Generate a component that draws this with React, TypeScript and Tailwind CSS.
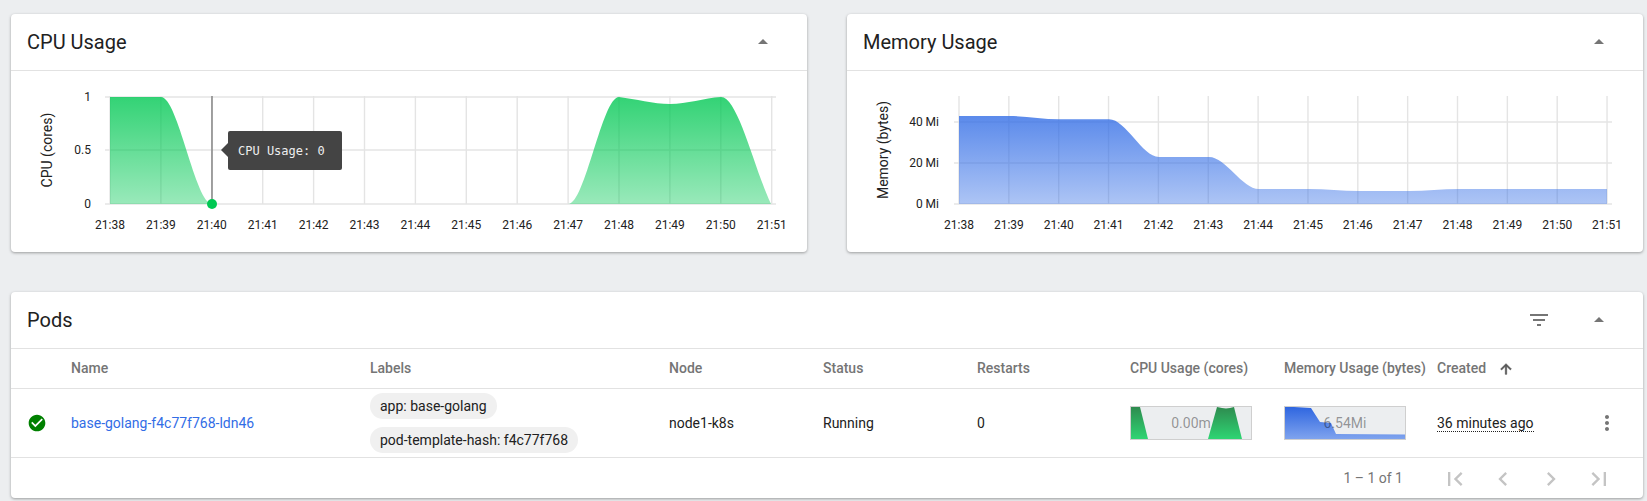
import type { ReactNode } from "react";

const mono = "font-['DejaVu_Sans_Mono',monospace]";
const rowCols =
  "grid grid-cols-[60px_299px_299px_154px_154px_153px_154px_153px_135px_1fr] items-center";

const xTicks = [
  "21:38", "21:39", "21:40", "21:41", "21:42", "21:43", "21:44",
  "21:45", "21:46", "21:47", "21:48", "21:49", "21:50", "21:51",
];

function Icon({ d, size = 24, className }: { d: string; size?: number; className?: string }) {
  return (
    <svg width={size} height={size} viewBox="0 0 24 24" className={className} fill="currentColor">
      <path d={d} />
    </svg>
  );
}

function CardHeader({ title, children }: { title: string; children?: ReactNode }) {
  return (
    <div className="h-[57px] flex items-center pl-4 pr-8 border-b border-[#e2e2e2]">
      <h2 className="text-[20px] text-[#212121] grow">{title}</h2>
      {children}
      <Icon d="M7 14l5-5 5 5z" className="text-[#757575]" />
    </div>
  );
}

type Axis = {
  x0: number;
  step: number;
  hx: [number, number];
  yLabels: [string, number][];
  yLabelX: number;
};

function Grid({ x0, step, hx, yLabels, yLabelX }: Axis) {
  return (
    <g fontSize="12" fill="#212121">
      {xTicks.map((t, i) => (
        <g key={t}>
          <line x1={x0 + i * step} x2={x0 + i * step} y1={96} y2={204} stroke="#e4e4e4" strokeWidth="1.4" />
          <text x={x0 + i * step} y={229} textAnchor="middle">{t}</text>
        </g>
      ))}
      {yLabels.map(([label, y]) => (
        <g key={label}>
          <line x1={hx[0]} x2={hx[1]} y1={y} y2={y} stroke="#e4e4e4" strokeWidth="1.4" />
          <text x={yLabelX} y={y + 4} textAnchor="end">{label}</text>
        </g>
      ))}
    </g>
  );
}

function CpuChart() {
  return (
    <div className="relative h-[181px]">
      <svg width="796" height="181" viewBox="11 71 796 181" className="block">
        <defs>
          <linearGradient id="cpuFill" x1="0" y1="0" x2="0" y2="1">
            <stop offset="0" stopColor="#00c853" stopOpacity="0.8" />
            <stop offset="1" stopColor="#00c853" stopOpacity="0.4" />
          </linearGradient>
        </defs>
        <Grid
          x0={110}
          step={50.9}
          hx={[105, 776]}
          yLabels={[["1", 97], ["0.5", 150], ["0", 204]]}
          yLabelX={91}
        />
        <text transform="translate(52 150) rotate(-90)" textAnchor="middle" fontSize="14" fill="#212121">
          CPU (cores)
        </text>
        <path
          fill="url(#cpuFill)"
          d="M110 97 L161 97 C178 97 195 204 212 204 L110 204 Z"
        />
        <path
          fill="url(#cpuFill)"
          d="M568 204 C585 204 602 97 619 97 C636 99 653 104 670 104 C687 104 704 98 721 97 C738 97 754 168 771 204 Z"
        />
        <line x1="212" x2="212" y1="96" y2="204" stroke="#555" strokeWidth="1" />
        <circle cx="212" cy="204" r="5" fill="#00c853" />
      </svg>
      <div className={`${mono} absolute left-[217px] top-[60px] w-[114px] h-[39px] rounded-[2px] bg-[#444] text-[#eee] text-[12px] flex items-center pl-[10px]`}>
        CPU Usage: 0
        <span className="absolute left-[-7px] top-[12px] w-0 h-0 border-y-[7px] border-y-transparent border-r-[7px] border-r-[#444]" />
      </div>
    </div>
  );
}

function MemoryChart() {
  return (
    <div className="h-[181px]">
      <svg width="796" height="181" viewBox="847 71 796 181" className="block">
        <defs>
          <linearGradient id="memFill" x1="0" y1="0" x2="0" y2="1">
            <stop offset="0" stopColor="#326de6" stopOpacity="0.8" />
            <stop offset="1" stopColor="#326de6" stopOpacity="0.4" />
          </linearGradient>
        </defs>
        <Grid
          x0={959}
          step={49.85}
          hx={[954, 1612]}
          yLabels={[["40 Mi", 122], ["20 Mi", 163], ["0 Mi", 204]]}
          yLabelX={939}
        />
        <text transform="translate(888 150) rotate(-90)" textAnchor="middle" fontSize="14" fill="#212121">
          Memory (bytes)
        </text>
        <path
          fill="url(#memFill)"
          d="M959 116 L1009 116 C1026 116 1042 119.3 1059 119.3 L1109 119.3 C1126 119.3 1142 157 1159 157 L1209 157 C1226 157 1242 189 1259 189 L1309 189 C1326 189 1342 191 1359 191 L1409 191 C1426 191 1442 189 1459 189 L1607 189 L1607 204 L959 204 Z"
        />
      </svg>
    </div>
  );
}

function Spark({ children, value }: { children: ReactNode; value: string }) {
  return (
    <div className="relative w-[122px] h-[34px] border border-[#cfcfcf] bg-[#eceef0]">
      <svg width="120" height="32" viewBox="0 0 120 32" className="block">
        {children}
      </svg>
      <span className="absolute inset-0 flex items-center justify-center text-[14px] text-black/40">{value}</span>
    </div>
  );
}

function Chip({ children }: { children: ReactNode }) {
  return (
    <span className="h-[26px] w-fit flex items-center rounded-full bg-[#f0f0f0] px-[10px] text-[14px] text-[#212121]">
      {children}
    </span>
  );
}

function PodsTable() {
  const heads = [
    "", "Name", "Labels", "Node", "Status", "Restarts",
    "CPU Usage (cores)", "Memory Usage (bytes)",
  ];
  return (
    <div className="bg-white rounded-[4px] shadow-[0_1px_3px_rgba(0,0,0,0.35)] h-[206px]">
      <CardHeader title="Pods">
        <Icon d="M10 18h4v-2h-4v2zM3 6v2h18V6H3zm3 7h12v-2H6v2z" className="text-[#757575] mr-[36px]" />
      </CardHeader>
      <div className={`${rowCols} h-[40px] border-b border-[#e2e2e2] text-[14px] font-medium text-[#757575]`}>
        {heads.map((h, i) => (
          <div key={i} className="whitespace-nowrap">{h}</div>
        ))}
        <div className="flex items-center">
          Created
          <Icon
            d="M4 12l1.41 1.41L11 7.83V20h2V7.83l5.58 5.59L20 12l-8-8-8 8z"
            size={16}
            className="ml-[12px] text-[#555] stroke-current stroke-1"
          />
        </div>
      </div>
      <div className={`${rowCols} h-[69px] border-b border-[#e2e2e2] text-[14px] text-[#212121]`}>
        <div className="pl-[16px]">
          <Icon
            d="M12 2C6.48 2 2 6.48 2 12s4.48 10 10 10 10-4.48 10-10S17.52 2 12 2zm-2 15l-5-5 1.41-1.41L10 14.17l7.59-7.59L19 8l-9 9z"
            size={20}
            className="text-[#008000]"
          />
        </div>
        <div className="text-[#326de6]">base-golang-f4c77f768-ldn46</div>
        <div className="flex flex-col gap-2">
          <Chip>app: base-golang</Chip>
          <Chip>pod-template-hash: f4c77f768</Chip>
        </div>
        <div>node1-k8s</div>
        <div>Running</div>
        <div>0</div>
        <Spark value="0.00m">
          <defs>
            <linearGradient id="sparkCpu" x1="0" y1="0" x2="0" y2="1">
              <stop offset="0" stopColor="#2e8b4f" />
              <stop offset="1" stopColor="#2ed573" />
            </linearGradient>
          </defs>
          <path fill="url(#sparkCpu)" d="M0 0 L9 0 L17 32 L0 32 Z" />
          <path fill="url(#sparkCpu)" d="M77 32 L86 0 L91 1 L95 1.5 L99 1 L103 0 L111 32 Z" />
        </Spark>
        <Spark value="6.54Mi">
          <defs>
            <linearGradient id="sparkMem" x1="0" y1="0" x2="0" y2="1">
              <stop offset="0" stopColor="#2f66e0" />
              <stop offset="1" stopColor="#7fa3ee" />
            </linearGradient>
          </defs>
          <path fill="url(#sparkMem)" d="M0 0 L9 0 L26 1 L35 15 L46 16 L51 27 L120 27.5 L120 32 L0 32 Z" />
        </Spark>
        <div>
          <span className="border-b border-dotted border-[#212121] leading-[16px] inline-block">36 minutes ago</span>
        </div>
        <div className="flex justify-center pr-[2px]">
          <Icon
            d="M12 8c1.1 0 2-.9 2-2s-.9-2-2-2-2 .9-2 2 .9 2 2 2zm0 2c-1.1 0-2 .9-2 2s.9 2 2 2 2-.9 2-2-.9-2-2-2zm0 6c-1.1 0-2 .9-2 2s.9 2 2 2 2-.9 2-2-.9-2-2-2z"
            className="text-[#757575]"
          />
        </div>
      </div>
      <div className="h-[40px] flex items-center justify-end pr-[20px] pt-[1px] text-[14px] text-[#757575]">
        <span className="mr-[28px]">1 – 1 of 1</span>
        {[
          "M18.41 16.59L13.82 12l4.59-4.59L17 6l-6 6 6 6zM6 6h2v12H6z",
          "M15.41 7.41L14 6l-6 6 6 6 1.41-1.41L10.83 12z",
          "M10 6L8.59 7.41 13.17 12l-4.58 4.59L10 18l6-6z",
          "M5.59 7.41L10.18 12l-4.59 4.59L7 18l6-6-6-6zM16 6h2v12h-2z",
        ].map((d) => (
          <div key={d} className="w-[48px] flex justify-center text-[#c4c4c4]">
            <Icon d={d} size={28} />
          </div>
        ))}
      </div>
    </div>
  );
}

export default function App() {
  return (
    <div className="h-[501px] bg-[#eceef0] pl-[11px] pr-[4px] pt-[14px] font-['Roboto',sans-serif] overflow-hidden">
      <div className="grid grid-cols-2 gap-x-10 mb-10">
        <div className="bg-white rounded-[4px] shadow-[0_1px_3px_rgba(0,0,0,0.35)] h-[238px]">
          <CardHeader title="CPU Usage" />
          <CpuChart />
        </div>
        <div className="bg-white rounded-[4px] shadow-[0_1px_3px_rgba(0,0,0,0.35)] h-[238px]">
          <CardHeader title="Memory Usage" />
          <MemoryChart />
        </div>
      </div>
      <PodsTable />
    </div>
  );
}
